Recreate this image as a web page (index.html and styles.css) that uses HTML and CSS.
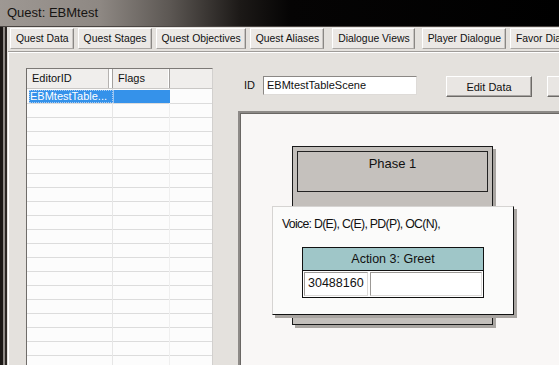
FILE: index.html
```html
<!DOCTYPE html>
<html lang="en">
<head>
    <meta charset="UTF-8">
    <title>Quest: EBMtest</title>
    <link rel="stylesheet" href="styles.css">
</head>
<body>
    <div class="window">
        <div class="titlebar">
            <span class="title">Quest: EBMtest</span>
        </div>

        <div class="frame">
            <div class="frame-edge"></div>

            <div class="client">
                <!-- Tab strip -->
                <div class="tabs">
                    <div class="tab">Quest Data</div>
                    <div class="tab">Quest Stages</div>
                    <div class="tab">Quest Objectives</div>
                    <div class="tab">Quest Aliases</div>
                    <div class="tab">Dialogue Views</div>
                    <div class="tab">Player Dialogue</div>
                    <div class="tab">Favor Dialogue</div>
                </div>

                <div class="tab-panel">
                    <!-- Scene list -->
                    <div class="scene-list">
                        <div class="list-head">
                            <div class="head-cell col-id">EditorID</div>
                            <div class="head-cell col-flags">Flags</div>
                            <div class="head-cell col-rest"></div>
                        </div>
                        <div class="list-body">
                            <div class="row selected">
                                <div class="cell col-id">EBMtestTable...</div>
                                <div class="cell col-flags"></div>
                            </div>
                        </div>
                    </div>

                    <!-- Scene editor -->
                    <div class="scene-edit">
                        <div class="id-row">
                            <span class="id-label">ID</span>
                            <div class="id-field">EBMtestTableScene</div>
                            <button class="win-button">Edit Data</button>
                            <button class="win-button cut"></button>
                        </div>

                        <div class="canvas">
                            <div class="phase">
                                <div class="phase-title">Phase 1</div>
                            </div>
                            <div class="voice">
                                <p class="voice-text">Voice: D(E), C(E), PD(P), OC(N),</p>
                                <div class="action">
                                    <div class="action-head">Action 3: Greet</div>
                                    <div class="action-row">
                                        <div class="action-cell first">30488160</div>
                                        <div class="action-cell"></div>
                                    </div>
                                </div>
                            </div>
                        </div>
                    </div>
                </div>
            </div>
        </div>
    </div>
</body>
</html>
```

FILE: styles.css
```css
* {
    margin: 0;
    padding: 0;
    box-sizing: border-box;
}

body {
    width: 559px;
    height: 365px;
    overflow: hidden;
    font-family: "Liberation Sans", Arial, sans-serif;
    font-size: 11px;
    color: #111;
    background: #e4e1dd;
}

.window {
    display: flex;
    flex-direction: column;
    height: 100%;
}

/* Title bar */
.titlebar {
    height: 27px;
    flex: none;
    display: flex;
    align-items: center;
    padding-left: 7px;
    background: linear-gradient(90deg, #9e9893 0, #8e8883 100px, #5c5753 170px, #1c1917 240px, #050404 290px, #000 100%);
    border-bottom: 1px solid #4a4542;
}

.title {
    font-size: 13px;
    color: #161412;
    padding-bottom: 1px;
}

.frame {
    flex: 1;
    display: flex;
    min-height: 0;
}

.frame-edge {
    width: 7px;
    flex: none;
    background: linear-gradient(90deg, #1b1715 0 3px, #8d8884 3px 5px, #2b2623 5px 7px);
}

.client {
    flex: 1;
    display: flex;
    flex-direction: column;
    min-width: 0;
}

/* Tabs */
.tabs {
    display: flex;
    gap: 4px;
    padding: 1px 0 0 3px;
    height: 24px;
    flex: none;
    white-space: nowrap;
    overflow: hidden;
}

.tab {
    height: 21px;
    padding: 0 4px 0 5px;
    font-size: 10.4px;
    line-height: 19px;
    background: #ebe8e5;
    border-top: 1px solid #fff;
    border-left: 1px solid #fff;
    border-right: 1px solid #8a8784;
    border-bottom: 1px solid #a9a6a3;
    box-shadow: inset -1px 0 0 #c7c4c1;
    flex: none;
}

.tab:nth-child(4) { margin-right: 4px; }
.tab:nth-child(5) { margin-right: 3px; }

.tab-panel {
    flex: 1;
    display: flex;
    margin-left: 1px;
    border-top: 1px solid #9f9c99;
    box-shadow: inset 1px 1px 0 #fff;
    min-height: 0;
}

/* Scene list */
.scene-list {
    width: 187px;
    flex: none;
    margin: 16px 0 0 18px;
    display: flex;
    flex-direction: column;
    background: #fcfcfc;
    border-top: 1px solid #7c7976;
    border-left: 1px solid #6f6c69;
    border-right: 1px solid #d2d0ce;
}

.list-head {
    display: flex;
    height: 20px;
    flex: none;
    background: #f0eeec;
    border-bottom: 1px solid #c9c7c5;
}

.head-cell {
    padding-left: 5px;
    line-height: 19px;
    border-right: 1px solid #a3a09e;
    box-shadow: inset -1px 0 0 #fff;
}

.col-id {
    width: 86px;
    flex: none;
}

.col-id.head-cell {
    box-shadow: inset -3px 0 0 #fff, inset -4px 0 0 #b5b2b0;
}

.col-flags {
    width: 57px;
    flex: none;
}

.col-rest {
    flex: 1;
    border-right: none;
    box-shadow: none;
}

.list-body {
    flex: 1;
    padding: 1px 0 0 2px;
    background:
        linear-gradient(90deg, transparent 85px, #e6e6e6 85px 86px, transparent 86px),
        linear-gradient(90deg, transparent 142px, #efefef 142px 143px, transparent 143px),
        repeating-linear-gradient(180deg, transparent 0 13px, #dcdcdc 13px 14px);
    background-position: 0 0, 0 0, 0 1px;
}

.row {
    display: flex;
    height: 13px;
}

.row.selected .cell {
    background: #3592ea;
    color: #fff;
    line-height: 13px;
    padding-left: 1px;
}

.row.selected .col-id {
    width: 84px;
    outline: 1px dotted #a8cdf5;
    outline-offset: -1px;
}

.row.selected .col-flags {
    width: 57px;
    border-left: 1px solid #9cc4ef;
}

/* Scene editor */
.scene-edit {
    flex: 1;
    display: flex;
    flex-direction: column;
    margin-left: 25px;
    min-width: 0;
}

.id-row {
    display: flex;
    align-items: flex-start;
    height: 59px;
    flex: none;
    padding: 24px 0 0 6px;
    white-space: nowrap;
}

.id-label {
    width: 19px;
    flex: none;
    line-height: 19px;
}

.id-field {
    width: 154px;
    height: 19px;
    flex: none;
    padding-left: 3px;
    line-height: 16px;
    background: #fff;
    border-top: 1px solid #8b8885;
    border-left: 1px solid #8b8885;
    border-right: 1px solid #dedbd8;
    border-bottom: 1px solid #dedbd8;
}

.win-button {
    width: 86px;
    height: 21px;
    flex: none;
    margin-left: 29px;
    font: inherit;
    color: #111;
    background: #e9e6e3;
    border-top: 1px solid #fff;
    border-left: 1px solid #fff;
    border-right: 1px solid #6d6a67;
    border-bottom: 1px solid #6d6a67;
    box-shadow: inset -1px -1px 0 #a8a5a2;
}

.win-button.cut {
    margin-left: 15px;
}

/* Diagram canvas */
.canvas {
    position: relative;
    flex: 1;
    width: 400px;
    background: #f9f7f6;
    border-top: 2px solid #8d8a87;
    border-left: 2px solid #8d8a87;
    box-shadow: inset 1px 1px 0 #6a6764;
}

.phase {
    position: absolute;
    left: 52px;
    top: 33px;
    width: 201px;
    height: 179px;
    background: #c3bfbb;
    border: 1px solid #1a1a1a;
    box-shadow: 3px 3px 0 #a9a5a1;
}

.phase-title {
    margin: 4px 0 0 4px;
    width: 191px;
    height: 41px;
    border: 1px solid #222;
    background: #c5c1bd;
    font-size: 13px;
    text-align: center;
    padding-top: 4px;
}

.voice {
    position: absolute;
    left: 32px;
    top: 93px;
    width: 242px;
    height: 109px;
    background: #fbfbfa;
    border-top: 1px solid #d6d4d2;
    border-left: 1px solid #d6d4d2;
    border-right: 1px solid #111;
    border-bottom: 1px solid #111;
    box-shadow: 3px 3px 0 #a9a5a1;
}

.voice-text {
    font-size: 12.3px;
    letter-spacing: -0.7px;
    padding: 10px 0 0 9px;
    height: 40px;
}

.action {
    margin-left: 29px;
    width: 182px;
    border: 1px solid #111;
    background: #fff;
}

.action-head {
    height: 23px;
    line-height: 22px;
    background: #9fc6c8;
    border-bottom: 1px solid #111;
    text-align: center;
    font-size: 12.5px;
}

.action-row {
    display: flex;
    gap: 2px;
    padding: 1px;
    height: 26px;
}

.action-cell {
    flex: 1;
    font-size: 12.5px;
    line-height: 21px;
    padding-left: 3px;
    background: #fff;
    border-top: 1px solid #9c9996;
    border-left: 1px solid #9c9996;
    border-right: 1px solid #dcdad8;
    border-bottom: 1px solid #dcdad8;
}

.action-cell.first {
    flex: none;
    width: 64px;
}
```
